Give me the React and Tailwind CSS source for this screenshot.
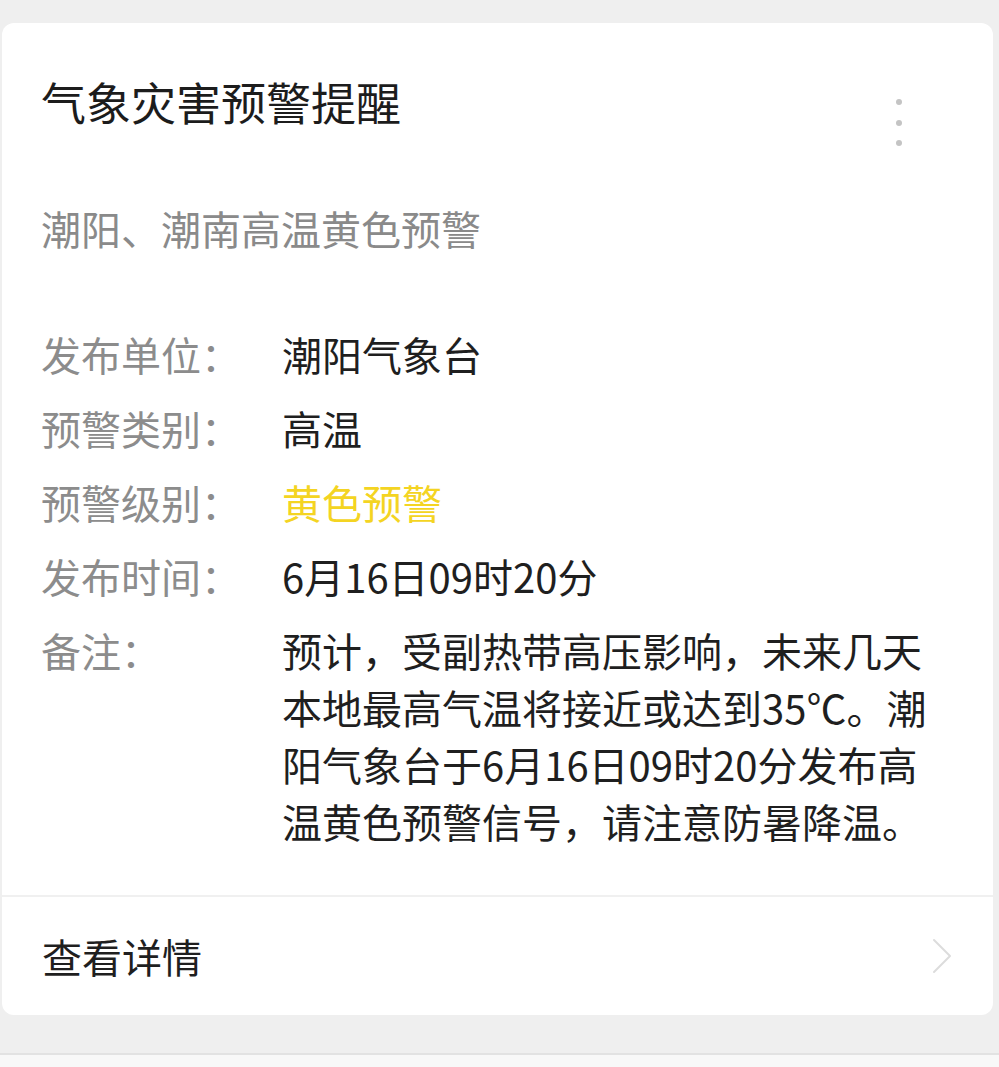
import React from 'react';

const rows = [
  { label: '发布单位：', value: '潮阳气象台' },
  { label: '预警类别：', value: '高温' },
  { label: '预警级别：', value: '黄色预警', highlight: true },
  { label: '发布时间：', value: '6月16日09时20分' },
];

const remarkLines = [
  '预计，受副热带高压影响，未来几天',
  '本地最高气温将接近或达到35℃。潮',
  '阳气象台于6月16日09时20分发布高',
  '温黄色预警信号，请注意防暑降温。',
];

const font = { fontFamily: '"Noto Sans CJK SC", "Noto Sans", sans-serif' };

const App = () => {
  return (
    <div className="w-full min-h-[1067px] bg-[#efefef]" style={font}>
      <div className="pt-[23px] pl-[2px]">
        <div className="w-[991px] bg-white rounded-[12px] overflow-hidden">
          <div className="pl-[39px] pt-[50px] pb-[45px]">
            {/* header */}
            <div className="flex items-start justify-between pr-[91px]">
              <h1 className="text-[45px] leading-[57px] text-[#1c1c1c] font-normal">气象灾害预警提醒</h1>
              <div className="flex flex-col gap-[14.5px] mt-[26px]">
                <span className="block w-[6px] h-[6px] rounded-full bg-[#c4c4c4]" />
                <span className="block w-[6px] h-[6px] rounded-full bg-[#c4c4c4]" />
                <span className="block w-[6px] h-[6px] rounded-full bg-[#c4c4c4]" />
              </div>
            </div>

            <p className="mt-[56px] text-[40px] leading-[52px] text-[#8a8a8a]">潮阳、潮南高温黄色预警</p>

            {/* details */}
            <div className="mt-[72px] flex flex-col gap-[17px] text-[40px] leading-[57px]">
              {rows.map((row, index) => (
                <div key={index} className="flex">
                  <span className="w-[241px] shrink-0 text-[#8c8c8c]">{row.label}</span>
                  <span className={row.highlight ? 'text-[#f4d422]' : 'text-[#1f1f1f]'}>{row.value}</span>
                </div>
              ))}
              <div className="flex">
                <span className="w-[241px] shrink-0 text-[#8c8c8c]">备注：</span>
                <div className="text-[#1f1f1f]">
                  {remarkLines.map((line, i) => (
                    <div key={i} className="whitespace-nowrap">{line}</div>
                  ))}
                </div>
              </div>
            </div>
          </div>

          {/* footer */}
          <div className="border-t-2 border-[#f0f0f0] h-[120px] flex items-center justify-between pl-[40px] pr-[40px]">
            <span className="text-[40px] text-[#1f1f1f]">查看详情</span>
            <svg width="20" height="36" viewBox="0 0 20 36" fill="none" className="mr-[1px]">
              <path d="M2 2 L18 18 L2 34" stroke="#dcdcdc" strokeWidth="2" strokeLinecap="round" strokeLinejoin="round" />
            </svg>
          </div>
        </div>
      </div>
      <div className="mt-[38px] h-[2px] bg-[#e2e2e2]" />
      <div className="h-[12px] bg-[#f8f8f8]" />
    </div>
  );
};

export default App;
